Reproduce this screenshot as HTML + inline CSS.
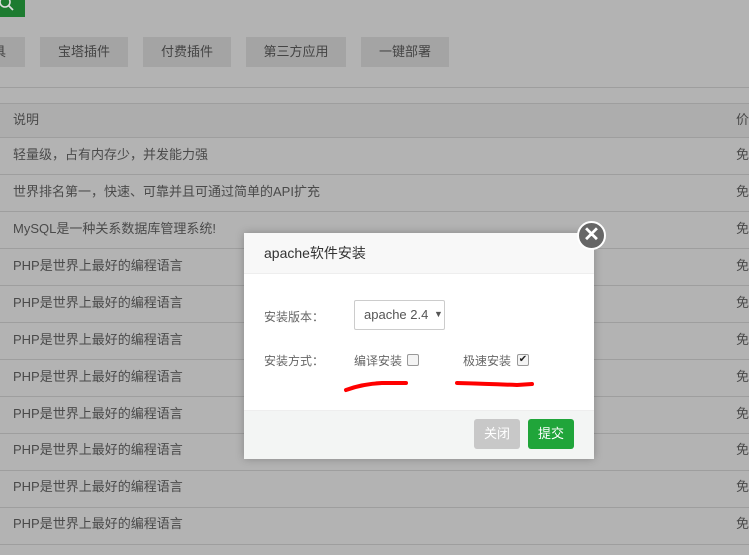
<!DOCTYPE html>
<html><head><meta charset="utf-8"><style>
*{margin:0;padding:0;box-sizing:border-box}
body{width:749px;height:555px;overflow:hidden;background:#b3b3b3;font-family:"Liberation Sans","Noto Sans CJK SC",sans-serif;font-size:13px;color:#4a4a4a;position:relative}
.a{position:absolute}
.btn{position:absolute;top:37px;height:30px;background:#a4a4a4;line-height:30px;text-align:center;color:#444}
.line{position:absolute;left:0;width:749px;height:1px;background:#9e9e9e}
.t{position:absolute;left:13px;line-height:16px}
.p{position:absolute;left:736px;line-height:16px}
</style></head><body>
<div class="a" style="left:0;top:0;width:25px;height:17px;background:#1d7b30"></div>
<svg class="a" style="left:0;top:0" width="20" height="14"><circle cx="5" cy="2" r="5" stroke="#ddd" stroke-width="1.6" fill="none"/><line x1="9" y1="6" x2="13" y2="10" stroke="#ddd" stroke-width="1.8"/></svg>
<div class="btn" style="left:0;width:25px;overflow:hidden;text-align:left"><span style="position:relative;left:-7px">具</span></div>
<div class="btn" style="left:40px;width:88px">宝塔插件</div>
<div class="btn" style="left:143px;width:88px">付费插件</div>
<div class="btn" style="left:246px;width:100px">第三方应用</div>
<div class="btn" style="left:361px;width:88px">一键部署</div>
<div class="line" style="top:87px"></div>
<div class="a" style="left:0;top:103px;width:749px;height:34px;background:#adadad"></div>
<div class="line" style="top:103px"></div>
<div class="line" style="top:137px"></div>
<div class="t" style="top:112px">说明</div><div class="p" style="top:112px">价</div>
<div class="line" style="top:174px"></div>
<div class="line" style="top:211px"></div>
<div class="line" style="top:248px"></div>
<div class="line" style="top:285px"></div>
<div class="line" style="top:322px"></div>
<div class="line" style="top:359px"></div>
<div class="line" style="top:396px"></div>
<div class="line" style="top:433px"></div>
<div class="line" style="top:470px"></div>
<div class="line" style="top:507px"></div>
<div class="line" style="top:544px"></div>
<div class="t" style="top:147px">轻量级，占有内存少，并发能力强</div><div class="p" style="top:147px">免</div>
<div class="t" style="top:184px">世界排名第一，快速、可靠并且可通过简单的API扩充</div><div class="p" style="top:184px">免</div>
<div class="t" style="top:221px">MySQL是一种关系数据库管理系统!</div><div class="p" style="top:221px">免</div>
<div class="t" style="top:258px">PHP是世界上最好的编程语言</div><div class="p" style="top:258px">免</div>
<div class="t" style="top:295px">PHP是世界上最好的编程语言</div><div class="p" style="top:295px">免</div>
<div class="t" style="top:332px">PHP是世界上最好的编程语言</div><div class="p" style="top:332px">免</div>
<div class="t" style="top:369px">PHP是世界上最好的编程语言</div><div class="p" style="top:369px">免</div>
<div class="t" style="top:406px">PHP是世界上最好的编程语言</div><div class="p" style="top:406px">免</div>
<div class="t" style="top:442px">PHP是世界上最好的编程语言</div><div class="p" style="top:442px">免</div>
<div class="t" style="top:479px">PHP是世界上最好的编程语言</div><div class="p" style="top:479px">免</div>
<div class="t" style="top:516px">PHP是世界上最好的编程语言</div><div class="p" style="top:516px">免</div>

<div class="a" style="left:244px;top:233px;width:350px;height:226px;background:#fff;box-shadow:0 0 8px rgba(0,0,0,.25)">
 <div class="a" style="left:0;top:0;width:350px;height:41px;background:#f8f8f8;border-bottom:1px solid #eee;padding-left:20px;line-height:41px;font-size:14px;color:#333">apache软件安装</div>
 <div class="a" style="left:20px;top:75px;color:#666;font-size:12px">安装版本：</div>
 <div class="a" style="left:110px;top:67px;width:91px;height:30px;border:1px solid #ccc;border-radius:2px;line-height:28px;padding-left:9px;color:#555;font-size:13px">apache 2.4 <span style="font-size:9px;position:relative;top:-2px;left:2px">▼</span></div>
 <div class="a" style="left:20px;top:119px;color:#666;font-size:12px">安装方式：</div>
 <div class="a" style="left:110px;top:119px;color:#666;font-size:12px">编译安装</div>
 <div class="a" style="left:163px;top:121px;width:12px;height:12px;border:1px solid #999;border-radius:2px;background:#f4f4f4"></div>
 <div class="a" style="left:219px;top:119px;color:#666;font-size:12px">极速安装</div>
 <div class="a" style="left:273px;top:121px;width:12px;height:12px;border:1px solid #999;border-radius:2px;background:#f4f4f4;font-size:10px;line-height:10px;text-align:center;color:#222">✔</div>
 <svg class="a" style="left:98px;top:145px" width="200" height="20"><path d="M4 12 Q20 6 40 5 L64 5" stroke="#f00" stroke-width="4" fill="none" stroke-linecap="round"/><path d="M115 5 Q150 6 175 7 L190 6" stroke="#f00" stroke-width="4" fill="none" stroke-linecap="round"/></svg>
 <div class="a" style="left:0;top:177px;width:350px;height:49px;background:#f3f5f4;border-top:1px solid #eee"></div>
 <div class="a" style="left:230px;top:186px;width:46px;height:30px;background:#c8c8c8;border-radius:3px;color:#fff;line-height:30px;text-align:center;font-size:13px">关闭</div>
 <div class="a" style="left:284px;top:186px;width:46px;height:30px;background:#20a53a;border-radius:3px;color:#fff;line-height:30px;text-align:center;font-size:13px">提交</div>
</div>
<div class="a" style="left:577px;top:221px;width:29px;height:29px;border-radius:50%;background:#666;border:2px solid #fff;color:#fff;text-align:center;line-height:24px;font-size:20px;font-weight:bold">✕</div>
</body></html>
